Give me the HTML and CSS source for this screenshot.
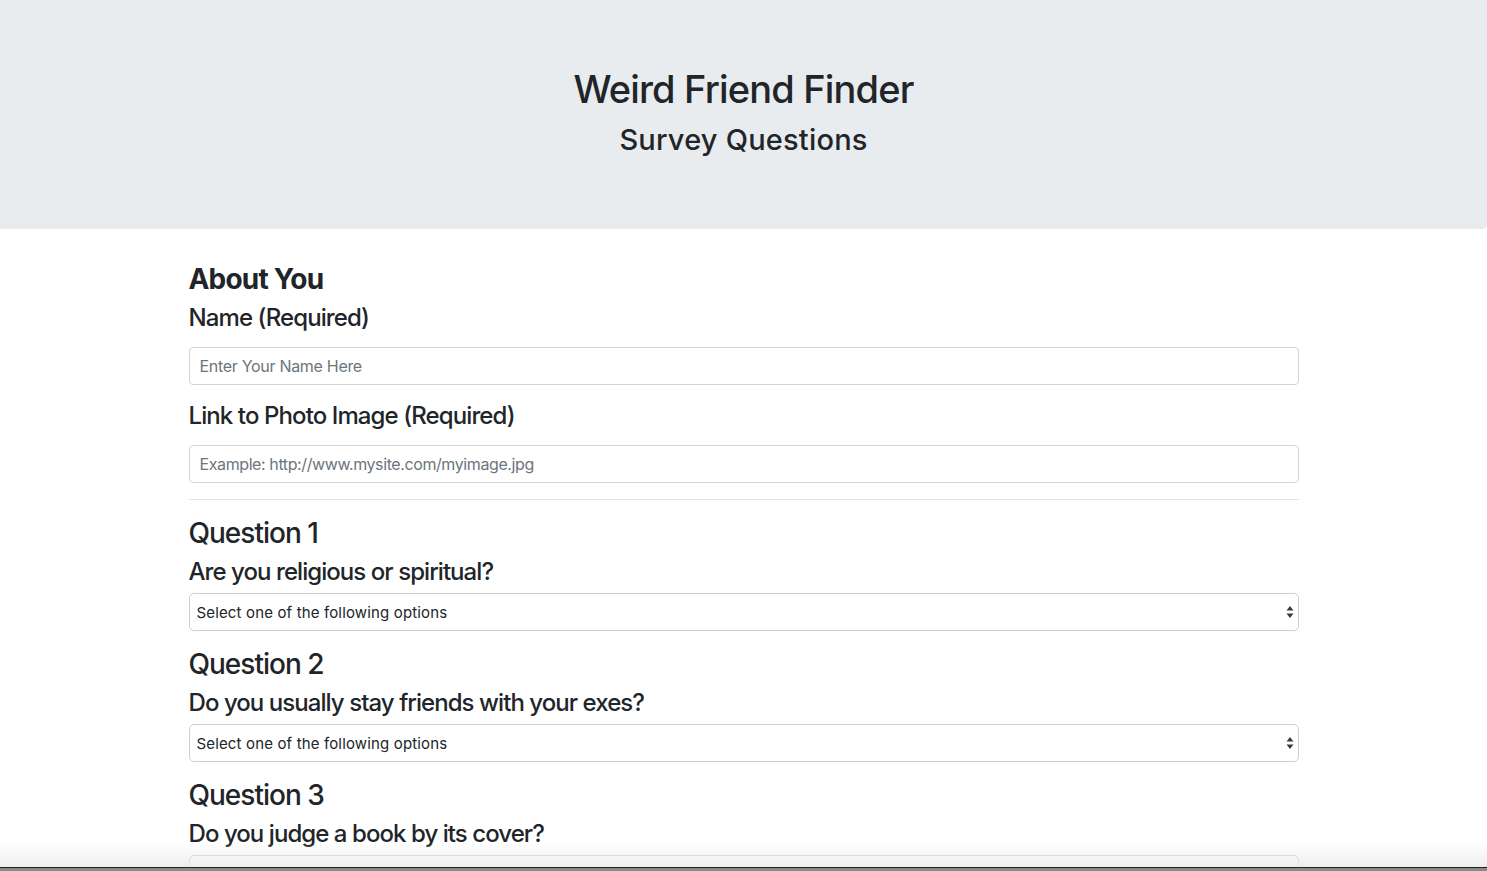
FILE: index.html
```html
<!DOCTYPE html>
<html lang="en">
<head>
<meta charset="utf-8">
<title>Weird Friend Finder</title>
<link rel="stylesheet" href="styles.css">
</head>
<body>
<header class="jumbotron">
  <h1 class="title">Weird Friend Finder</h1>
  <h3 class="subtitle">Survey Questions</h3>
</header>
<main class="container">
  <h3 class="section-title">About You</h3>
  <div class="form-group">
    <label class="label-block"><h4 class="q-text q-name">Name (Required)</h4></label>
    <input class="form-control" type="text" placeholder="Enter Your Name Here">
  </div>
  <div class="form-group">
    <label class="label-block"><h4 class="q-text q-name">Link to Photo Image (Required)</h4></label>
    <input class="form-control form-control-url" type="text" placeholder="Example: http://www.mysite.com/myimage.jpg">
  </div>
  <hr class="divider">

  <div class="form-group">
    <h3 class="q-title">Question 1</h3>
    <h4 class="q-text">Are you religious or spiritual?</h4>
    <div class="select-wrap">
      <select class="form-select"><option>Select one of the following options</option></select>
      <svg class="select-arrows" width="8" height="12" viewBox="0 0 8 12"><path d="M4 0 L7.5 4.6 H0.5 Z M4 12 L7.5 7.4 H0.5 Z" fill="#3a3a3a"/></svg>
    </div>
  </div>

  <div class="form-group">
    <h3 class="q-title">Question 2</h3>
    <h4 class="q-text">Do you usually stay friends with your exes?</h4>
    <div class="select-wrap">
      <select class="form-select"><option>Select one of the following options</option></select>
      <svg class="select-arrows" width="8" height="12" viewBox="0 0 8 12"><path d="M4 0 L7.5 4.6 H0.5 Z M4 12 L7.5 7.4 H0.5 Z" fill="#3a3a3a"/></svg>
    </div>
  </div>

  <div class="form-group">
    <h3 class="q-title">Question 3</h3>
    <h4 class="q-text">Do you judge a book by its cover?</h4>
    <div class="select-wrap">
      <select class="form-select"><option>Select one of the following options</option></select>
      <svg class="select-arrows" width="8" height="12" viewBox="0 0 8 12"><path d="M4 0 L7.5 4.6 H0.5 Z M4 12 L7.5 7.4 H0.5 Z" fill="#3a3a3a"/></svg>
    </div>
  </div>
</main>
<div class="window-edge"></div>
</body>
</html>
```
FILE: styles.css
```css
* { box-sizing: border-box; }

html, body {
  margin: 0;
  padding: 0;
  background: #fff;
  color: #212529;
  font-family: Inter, "Noto Sans", "Liberation Sans", sans-serif;
  font-size: 16px;
  line-height: 1.5;
}

h1, h3, h4 {
  margin: 0 0 8px 0;
  font-weight: 500;
  line-height: 1.2;
}

.jumbotron {
  background: #e9ecef;
  height: 229px;
  padding: 65px 32px 0;
  margin-bottom: 33px;
  text-align: center;
  border-bottom-right-radius: 5px;
}

.title {
  font-size: 38px;
  line-height: 48px;
  letter-spacing: -0.83px;
}

.subtitle {
  font-size: 29px;
  line-height: 34px;
  letter-spacing: 0.2px;
  margin-top: 10px;
}

.container {
  width: 1140px;
  margin: 0 auto;
  padding: 0 15px;
}

.section-title {
  font-size: 28px;
  font-weight: 700;
  letter-spacing: -0.8px;
  padding-top: 2px;
  line-height: 31px;
}

.q-title {
  font-size: 28px;
  letter-spacing: -1px;
  padding-top: 2px;
  line-height: 31px;
}

.q-text {
  font-size: 24px;
  letter-spacing: -0.94px;
  padding-top: 2px;
  line-height: 26px;
}

.q-name {
  letter-spacing: -0.9px;
}

.label-block {
  display: inline-block;
  margin-bottom: 8px;
}

.form-group {
  margin-bottom: 16px;
}

.form-control {
  display: block;
  width: 100%;
  height: 38px;
  padding: 6px 10px;
  font-family: inherit;
  font-size: 16px;
  letter-spacing: -0.3px;
  color: #495057;
  background: #fff;
  border: 1px solid #ced4da;
  border-radius: 4px;
  outline: none;
}

.form-control-url {
  letter-spacing: -0.4px;
}

.form-control::placeholder {
  color: #6c757d;
  opacity: 1;
}

.divider {
  border: 0;
  border-top: 1px solid rgba(0, 0, 0, 0.1);
  margin: 0 0 16px 0;
  height: 0;
}

.select-wrap {
  position: relative;
}

.form-select {
  display: block;
  width: 100%;
  height: 38px;
  padding: 0 7px;
  font-family: inherit;
  font-size: 15px;
  letter-spacing: 0.15px;
  color: #212529;
  background: #fff;
  border: 1px solid #cfcfcf;
  border-radius: 5px;
  -webkit-appearance: none;
  appearance: none;
  outline: none;
}

.select-arrows {
  position: absolute;
  right: 5px;
  top: 13px;
  pointer-events: none;
}

.window-edge {
  position: fixed;
  left: 0;
  right: 0;
  bottom: 0;
  height: 28px;
  background: linear-gradient(rgba(235, 235, 235, 0) 0, rgba(235, 235, 235, 0.85) 24px, #1f1f1f 24px, #1f1f1f 25px, #8a8a8a 25px);
  pointer-events: none;
}
```
